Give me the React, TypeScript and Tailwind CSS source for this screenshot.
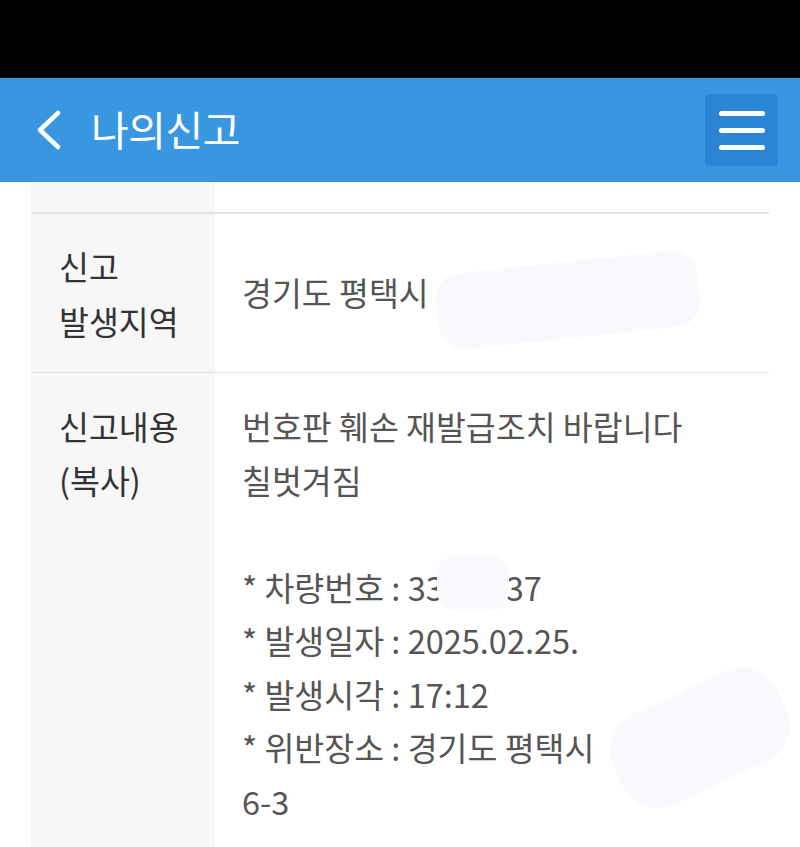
import React from "react";

const font = { fontFamily: '"Noto Sans CJK KR", "Noto Sans", sans-serif' };

function Blob({ className }: { className: string }) {
  return <span className={"absolute bg-[#f8f9fc] " + className} />;
}

export default function App() {
  return (
    <div className="w-[800px] h-[847px] overflow-hidden bg-white" style={font}>
      <div className="h-[78px] bg-black" />
      <div className="h-[104px] bg-[#3897e0] flex items-center pl-[33px] pr-[22px]">
        <svg width="30" height="42" viewBox="0 0 30 42" className="mr-[28px]">
          <path d="M25 4 L7 21 L25 38" stroke="white" strokeWidth="4.5" fill="none" strokeLinecap="round" strokeLinejoin="round" />
        </svg>
        <div className="text-white text-[41px] tracking-[-0.5px] leading-none mb-[4px]">나의신고</div>
        <div className="ml-auto w-[73px] h-[72px] rounded-[4px] bg-[#2a86d4] flex flex-col items-center justify-center gap-[12px]">
          <span className="block w-[46px] h-[5px] rounded-full bg-white" />
          <span className="block w-[46px] h-[5px] rounded-full bg-white" />
          <span className="block w-[46px] h-[5px] rounded-full bg-white" />
        </div>
      </div>
      <div className="mx-[31px] w-[738px]">
        <div className="flex h-[32px] border-b-2 border-[#e2e2e2]">
          <div className="w-[184px] bg-[#f7f7f8]" />
          <div className="flex-1" />
        </div>
        <div className="flex h-[159px] border-b border-[#e2e2e2]">
          <div className="w-[184px] bg-[#f7f7f8] flex flex-col justify-center pl-[28px] text-[32.5px] leading-[55px] text-[#333]">
            <div>신고</div>
            <div>발생지역</div>
          </div>
          <div className="flex-1 relative flex items-center pl-[27px] text-[32.5px] text-[#555]">
            <span className="mb-[2px]">경기도 평택시</span>
            <Blob className="left-[222px] top-[48px] w-[262px] h-[76px] rounded-[24px] -rotate-6" />
          </div>
        </div>
        <div className="flex h-[480px]">
          <div className="w-[184px] bg-[#f7f7f8] pt-[26px] pl-[28px] text-[32.5px] leading-[54px] text-[#333]">
            <div>신고내용</div>
            <div>(복사)</div>
          </div>
          <div className="flex-1 relative pt-[26px] pl-[27px] text-[32.5px] leading-[53.5px] text-[#555]">
            <div>번호판 훼손 재발급조치 바랍니다</div>
            <div>칠벗겨짐</div>
            <div>&nbsp;</div>
            <div>* 차량번호 : 33<span className="inline-block w-[62px]" />37</div>
            <div>* 발생일자 : 2025.02.25.</div>
            <div>* 발생시각 : 17:12</div>
            <div>* 위반장소 : 경기도 평택시</div>
            <div>6-3</div>
            <Blob className="left-[222px] top-[182px] w-[72px] h-[56px] rounded-[20px]" />
            <Blob className="left-[395px] top-[315px] w-[180px] h-[100px] rounded-[40px] -rotate-[25deg]" />
          </div>
        </div>
      </div>
    </div>
  );
}
